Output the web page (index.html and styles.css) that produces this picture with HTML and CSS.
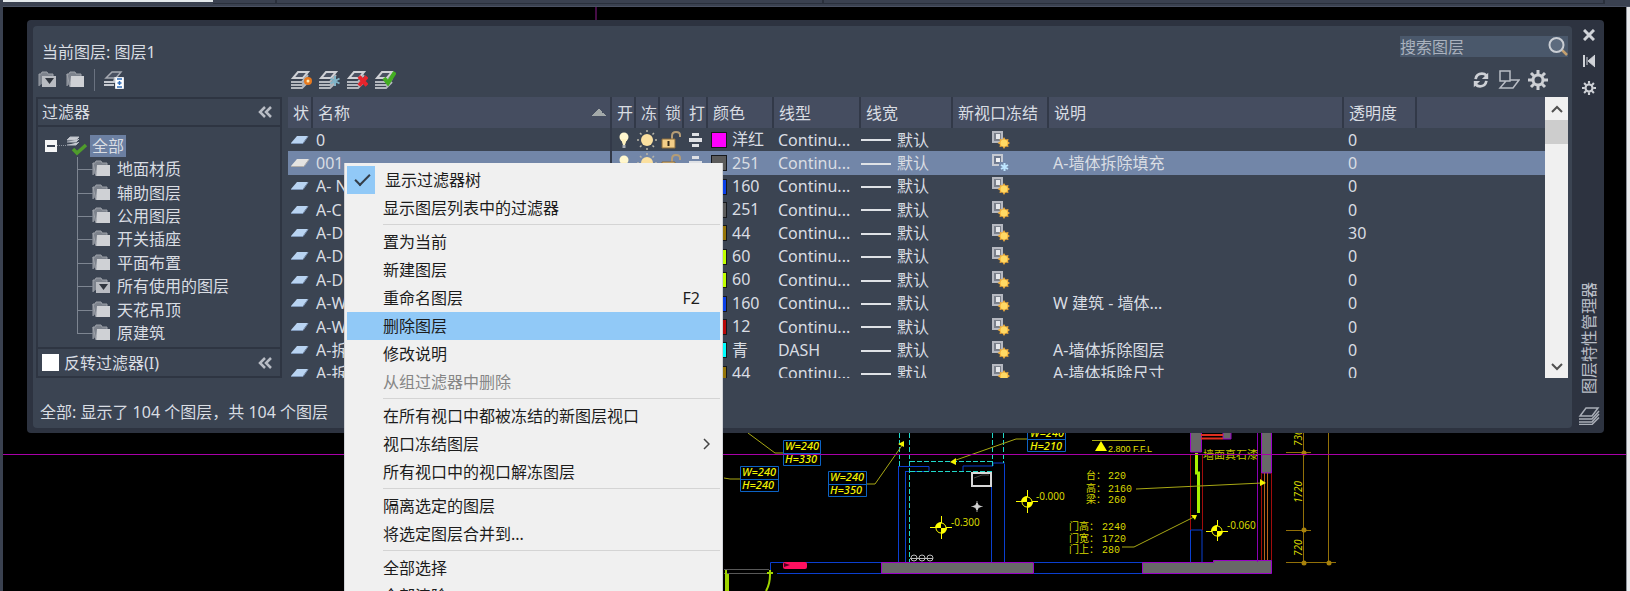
FILE: index.html
```html
<!DOCTYPE html>
<html lang="zh-CN">
<head>
    <meta charset="UTF-8">
    <meta name="viewport" content="width=device-width, initial-scale=1.0">
    <title>图层特性管理器</title>
    <link rel="stylesheet" href="styles.css">
</head>
<body>

<!-- 图标定义 -->
<svg class="icon-defs" width="0" height="0" aria-hidden="true">
    <defs>
        <symbol id="i-layers" viewBox="0 0 22 20">
            <path d="M8 2H18l-5 6H3z" fill="#4a5262" stroke="#cfd1d6" stroke-width="2"/>
            <path d="M1 12h11L18 5M1 15h11l6-6M1 18h11l6-6" fill="none" stroke="#b4b8be" stroke-width="2"/>
        </symbol>
        <symbol id="i-folder" viewBox="0 0 20 18">
            <path d="M1 15V3h2l1-2h5l1 2h5v2" fill="#7d838d" stroke="#9da1a9"/>
            <path d="M5 5h13v11H4z" fill="#cfd1d5"/>
            <path d="M1 3l3 13" stroke="#9da1a9"/>
        </symbol>
        <symbol id="i-folder-filter" viewBox="0 0 20 18">
            <path d="M1 15V3h2l1-2h5l1 2h5v2" fill="#7d838d" stroke="#9da1a9"/>
            <path d="M4 5h14v11H4z" fill="#b9bcc2"/>
            <path d="M7 7h9l-4.500 6z" fill="#30363f"/>
        </symbol>
        <symbol id="i-sheet" viewBox="0 0 20 12">
            <path d="M7 2h11l-5 7H1z" fill="#b9d4f2"/>
            <path d="M1 9.500h12l5-7" fill="none" stroke="#7f97b8"/>
        </symbol>
        <symbol id="i-sheet-gray" viewBox="0 0 20 12">
            <path d="M7 2h12l-5 7H1z" fill="#e4e3e1"/>
            <path d="M1 9.500h13l5-7" fill="none" stroke="#b0adaa"/>
        </symbol>
        <symbol id="i-bulb" viewBox="0 0 20 20">
            <circle cx="10" cy="7" r="4.500" fill="#fff7cf"/>
            <path d="M7 9h6l-2 6H9z" fill="#fff2c0"/>
            <path d="M8.500 15h3v3h-3z" fill="#a9adb3"/>
        </symbol>
        <symbol id="i-sun" viewBox="0 0 20 20">
            <circle cx="10" cy="10" r="6" fill="#fbe0a0"/>
            <path d="M10 0v2M10 18v2M0 10h2M18 10h2M3 3l1.500 1.500M15.500 15.500L17 17M17 3l-1.500 1.500M4.500 15.500L3 17" stroke="#b9b5a8" stroke-width="1.500"/>
        </symbol>
        <symbol id="i-lock" viewBox="0 0 20 20">
            <path d="M11 9V6q0-4 4-4t4 3v2" fill="none" stroke="#b59c75" stroke-width="2"/>
            <path d="M1 9h13v9H1z" fill="#f3cd87" stroke="#8b6d3c"/>
            <path d="M7.500 11v5" stroke="#33291a" stroke-width="2"/>
        </symbol>
        <symbol id="i-print" viewBox="0 0 20 20">
            <path d="M7 3h7v3H7zM4 8h13v4H4zM7 14h7v3H7z" fill="#dfe1e5"/>
        </symbol>
        <symbol id="i-vp" viewBox="0 0 20 20">
            <path d="M3 2h9v10H3z" fill="#7a808b" stroke="#b6b9c1" stroke-width="2"/>
            <path d="M6 4h4v5H6z" fill="#e6e8ec"/>
            <path d="M14 7l1.500 2.500L18.500 9 18 11.500l2 1.500-2 1.500.5 2.500-3-.5L14 19l-1.500-2.500-3 .5.5-2.500L7.500 13 10 11.500 9.500 9l3 .5z" fill="#f0ac38"/>
            <circle cx="14" cy="13" r="3.500" fill="#ffd964"/>
        </symbol>
        <symbol id="i-vp-frozen" viewBox="0 0 20 20">
            <path d="M3 2h9v10H3z" fill="#6f7a90" stroke="#c6cad3" stroke-width="2"/>
            <path d="M6 5h4v4H6z" fill="#f2f3f6"/>
            <path d="M9 9h11v10H9z" fill="#7286a8"/>
            <path d="M14.500 10v8M11 12l7 4M18 12l-7 4" stroke="#bfe6ff" stroke-width="2"/>
        </symbol>
        <symbol id="i-gear" viewBox="0 0 20 20">
            <circle cx="10" cy="10" r="5" fill="none" stroke="#cdd0d5" stroke-width="3"/>
            <path d="M10 0v4M10 16v4M0 10h4M16 10h4M3 3l3 3M14 14l3 3M17 3l-3 3M6 14l-3 3" stroke="#cdd0d5" stroke-width="3"/>
        </symbol>
        <symbol id="i-collapse" viewBox="0 0 14 12">
            <path d="M7 1L2 6l5 5M13 1L8 6l5 5" fill="none" stroke="#b9bdc5" stroke-width="2.500"/>
        </symbol>
    </defs>
</svg>

<div class="tab-strip"><div class="tab-active"></div><div class="tab"></div><div class="tab tab-wide"></div><div class="tab tab-wide tab-last"></div></div>

<!-- 绘图区 -->
<svg class="drawing" width="1630" height="591" viewBox="0 0 1630 591">
    <path d="M596 7v14" stroke="#8c1a8c"/>

    <!-- 墙体 -->
    <g fill="none" stroke="#0b3fd0">
        <path d="M770.500 574v-11.500h112M777 573.500h105M1034 562.500h109M1034 573.500h109"/>
        <path d="M898.500 466v96M905.500 471v91M991.500 471v91M1004.500 464v98M899 466.500h30v5M963 471v-5h30v-3h12M905 471.500h24"/>
        <path d="M1190.500 562v-32h11.500v32"/>
    </g>
    <g fill="none" stroke="#20d8c8" stroke-dasharray="5 2">
        <path d="M899.500 433v33M909.500 433v129M992.500 433v34M1003.500 433v30M910 461.500h82M910 471.500h82"/>
    </g>
    <g fill="#686868" stroke="#9a00c8">
        <path d="M881.500 562.500h152v11h-152z"/>
        <path d="M1142.500 562.500h71v-2h58v13h-129z"/>
        <path d="M1190.500 430v22h11v-22M1261.500 430v43h10v-43M1223 430v9h8v-9"/>
    </g>
    <path d="M1201 435h22M1201 438.500h22" stroke="#e03020" stroke-width="2"/>
    <path d="M1257.500 433v129" stroke="#8a00b0"/>
    <path d="M1190.500 454v76M1202.500 454v76M1261.500 473v87M1271.500 473v87" stroke="#a00c0c"/>
    <path d="M1264.500 473v87M1267.500 473v87" stroke="#b8621c"/>
    <path d="M1196.500 453v20h2v40" fill="none" stroke="#a8f000" stroke-width="3"/>

    <!-- 引线 -->
    <g fill="none" stroke="#a8a814">
        <path d="M748 433l27 20h8M724 478l6 1h10M867 484h8l28-40M1028 439h-12l-60 21l-3 2M1136 489l126-6M1122 547h12l60-30"/>
    </g>
    <path d="M898 444l6-3v6zM950 462l6-4v7zM1266 483l-6-4v7zM1197 515l-6 0l4 5z" fill="#f4f400"/>
    <path d="M1092 440.500h53" stroke="#a8a814"/>
    <path d="M1095 451l6-10 6 10z" fill="#ff0"/>

    <!-- 梁标注 -->
    <g fill="none" stroke="#0c62c4">
        <path d="M783.500 440.500h37v25h-37zM783 453.500h38M740.500 466.500h38v25h-38zM740 479.500h38M828.500 471.500h38v25h-38zM828 484.500h38M1027.500 426.500h38v25h-38zM1027 439.500h38"/>
    </g>
    <g class="cad-beam">
        <text x="785" y="450">W=240</text><text x="785" y="463">H=330</text>
        <text x="742" y="476">W=240</text><text x="742" y="489">H=240</text>
        <text x="830" y="481">W=240</text><text x="830" y="494">H=350</text>
        <text x="1030" y="437">W=240</text><text x="1030" y="450">H=210</text>
    </g>
    <text x="1108" y="452" class="cad-floor">2.800 F.F.L</text>

    <!-- 标高 -->
    <g stroke="#ff0" fill="#000">
        <path d="M930 527.500h22M941.500 516v23M1016 501.500h22M1027.500 490v23M1206 531.500h22M1217.500 520v21"/>
        <circle cx="941" cy="528" r="5"/><circle cx="1027" cy="502" r="5"/><circle cx="1217" cy="531" r="5"/>
    </g>
    <path d="M941 528v-6a6 6 0 0 0-6 6zM941 528v6a6 6 0 0 0 6-6zM1027 502v-6a6 6 0 0 0-6 6zM1027 502v6a6 6 0 0 0 6-6zM1217 531v-6a6 6 0 0 0-6 6zM1217 531v6a6 6 0 0 0 6-6z" fill="#ff0"/>
    <g class="cad-level">
        <text x="951" y="526">-0.300</text>
        <text x="1036" y="500">-0.000</text>
        <text x="1227" y="529">-0.060</text>
    </g>

    <!-- 门窗说明 -->
    <g class="cad-note">
        <text x="1086" y="479">台：<tspan x="1108">220</tspan></text>
        <text x="1086" y="492">高：<tspan x="1108">2160</tspan></text>
        <text x="1086" y="503">梁：<tspan x="1108">260</tspan></text>
        <text x="1069" y="530">门高：<tspan x="1102">2240</tspan></text>
        <text x="1069" y="542">门宽：<tspan x="1102">1720</tspan></text>
        <text x="1069" y="553">门上：<tspan x="1102">280</tspan></text>
    </g>
    <text x="1203" y="459" class="cad-wall">墙面真石漆</text>

    <!-- 尺寸线 -->
    <path d="M1303.500 433v130M1328.500 433v130M1286 452.500h25M1286 530.500h25M1286 562.500h50" stroke="#927008"/>
    <g fill="#a8820c"><circle cx="1304" cy="453" r="2.500"/><circle cx="1304" cy="530" r="2.500"/><circle cx="1304" cy="563" r="2.500"/><circle cx="1329" cy="563" r="2.500"/></g>
    <g class="cad-dim">
        <text transform="translate(1302 446) rotate(-90)">730</text>
        <text transform="translate(1302 503) rotate(-90)">1720</text>
        <text transform="translate(1302 556) rotate(-90)">720</text>
    </g>

    <!-- 洁具和门 -->
    <path d="M972 473h19v13h-19z" fill="none" stroke="#d8d8d8" stroke-width="2"/>
    <path d="M974 478l8-3h7" fill="none" stroke="#484848"/>
    <path d="M977 501v11M971.500 506.500h11" stroke="#a0a0a0"/>
    <path d="M977 503l1.500 2.500 2.500 1-2.500 1-1.500 2.500-1.500-2.500-2.500-1 2.500-1z" fill="#d0d0d0" stroke="#d0d0d0"/>
    <g fill="none" stroke="#b8b8b8"><circle cx="914" cy="558" r="3"/><circle cx="922" cy="558" r="3"/><circle cx="930" cy="558" r="3"/><path d="M910 558.500h23"/></g>
    <rect x="783" y="562" width="24" height="7" rx="2" fill="#ff1060"/>
    <path d="M784 563l6 2-6 2z" fill="#500020"/>
    <path d="M724 569.500h45M724 573.500h45" stroke="#585858"/>
    <path d="M726 570v21M728 574v17M770 570v5q0 9-4 16M767 573h6" fill="none" stroke="#9fd400" stroke-width="2"/>

    <path d="M3 454.500h1624" stroke="#a800a8"/>
</svg>

<main class="palette">
    <section class="panel">
        <div class="title-row">
            <h1 class="current-layer">当前图层: 图层1</h1>
            <div class="search">
                <input type="search" class="search-input" placeholder="搜索图层" aria-label="搜索图层">
                <svg class="search-icon" width="20" height="22" viewBox="0 0 20 22"><path d="M14 14l5 5" stroke="#c4a070" stroke-width="2.500"/><circle cx="8.500" cy="9" r="7" fill="#5d6b7e" stroke="#c9cdd3" stroke-width="2"/></svg>
            </div>
        </div>

        <div class="toolbar">
            <div class="tools tools-filter">
                <button class="tool" aria-label="新建特性过滤器"><svg width="20" height="18"><use href="#i-folder-filter"/></svg></button>
                <button class="tool" aria-label="新建组过滤器"><svg width="20" height="18"><use href="#i-folder"/></svg></button>
                <span class="tool-sep"></span>
                <button class="tool" aria-label="图层状态管理器"><svg width="22" height="20" viewBox="0 0 22 20"><path d="M9 2h9l-5 6H3z" fill="#4a5262" stroke="#a5a9b1" stroke-width="1.500"/><path d="M1 12h10l1-4h6M1 15h10" fill="none" stroke="#c6c9cf" stroke-width="2"/><path d="M12.500 7.500h8v11h-8z" fill="#fff" stroke="#e8eaee"/><path d="M14 9h5M14 17h5M16.500 11v4M14.500 13h4" stroke="#2f6cb8" stroke-width="1.500"/></svg></button>
            </div>
            <div class="tools tools-layer">
                <button class="tool" aria-label="新建图层"><svg width="22" height="20" viewBox="0 0 22 20"><use href="#i-layers"/><circle cx="18" cy="11" r="4" fill="#e8791e"/><circle cx="18" cy="11" r="1.500" fill="#ffe9b0"/></svg></button>
                <button class="tool" aria-label="在所有视口中都被冻结的新图层视口"><svg width="22" height="20" viewBox="0 0 22 20"><use href="#i-layers"/><path d="M17 6v10M12.500 8.500l9 5M21.500 8.500l-9 5" stroke="#7fb4c8" stroke-width="2"/></svg></button>
                <button class="tool" aria-label="删除图层"><svg width="22" height="20" viewBox="0 0 22 20"><use href="#i-layers"/><path d="M13 6.500l8 9M21 6.500l-8 9" stroke="#e8242c" stroke-width="4"/></svg></button>
                <button class="tool" aria-label="置为当前"><svg width="22" height="20" viewBox="0 0 22 20"><use href="#i-layers"/><path d="M10 8l4 5 7-11" fill="none" stroke="#43ad22" stroke-width="4"/></svg></button>
            </div>
            <div class="tools tools-right">
                <button class="tool" aria-label="刷新"><svg width="18" height="18" viewBox="0 0 20 20"><path d="M4 9q1-6 7-6 3 0 5 2M16 11q-1 6-7 6-3 0-5-2" fill="none" stroke="#cdd0d5" stroke-width="3"/><path d="M18 2v7h-7zM2 18v-7h7z" fill="#cdd0d5"/></svg></button>
                <button class="tool" aria-label="切换替代亮显"><svg width="22" height="20" viewBox="0 0 22 20"><path d="M2 1h10v10H2zM12 10h9l-6 8H2l6-7" fill="none" stroke="#b9bdc5" stroke-width="1.500"/></svg></button>
                <button class="tool" aria-label="设置"><svg width="20" height="20"><use href="#i-gear"/></svg></button>
            </div>
        </div>

        <div class="workspace">
            <aside class="filters">
                <div class="filters-head"><span>过滤器</span><button class="tool" aria-label="收拢过滤器"><svg width="14" height="12"><use href="#i-collapse"/></svg></button></div>
                <ul class="tree">
                    <li class="tree-root"><button class="expander" aria-label="收拢"></button><span class="root-line"></span><svg width="22" height="20" viewBox="0 0 22 20"><path d="M4 1h9l-3 3H1zM1 6h9l3-3M1 9h9l3-3" fill="#c9ccd2" stroke="#b9bdc5"/><path d="M7 13l4 4 9-8" fill="none" stroke="#4f9c2c" stroke-width="3.500"/></svg><span class="tree-label">全部</span></li>
                    <li class="tree-item"><svg width="20" height="18"><use href="#i-folder"/></svg>地面材质</li>
                    <li class="tree-item"><svg width="20" height="18"><use href="#i-folder"/></svg>辅助图层</li>
                    <li class="tree-item"><svg width="20" height="18"><use href="#i-folder"/></svg>公用图层</li>
                    <li class="tree-item"><svg width="20" height="18"><use href="#i-folder"/></svg>开关插座</li>
                    <li class="tree-item"><svg width="20" height="18"><use href="#i-folder"/></svg>平面布置</li>
                    <li class="tree-item"><svg width="20" height="18"><use href="#i-folder-filter"/></svg>所有使用的图层</li>
                    <li class="tree-item"><svg width="20" height="18"><use href="#i-folder"/></svg>天花吊顶</li>
                    <li class="tree-item"><svg width="20" height="18"><use href="#i-folder"/></svg>原建筑</li>
                </ul>
                <div class="filters-foot"><label class="invert"><input type="checkbox" class="check">反转过滤器(I)</label><button class="tool" aria-label="收拢"><svg width="14" height="12"><use href="#i-collapse"/></svg></button></div>
            </aside>

            <div class="list">
                <div class="list-view">
                <table class="layers">
                    <colgroup><col class="c-state"><col class="c-name"><col class="c-flag"><col class="c-flag"><col class="c-flag"><col class="c-flag"><col class="c-color"><col class="c-type"><col class="c-weight"><col class="c-vp"><col class="c-note"><col class="c-alpha"><col></colgroup>
                    <thead>
                        <tr><th>状</th><th class="sorted">名称</th><th>开</th><th>冻</th><th>锁</th><th>打</th><th>颜色</th><th>线型</th><th>线宽</th><th>新视口冻结</th><th>说明</th><th>透明度</th><th></th></tr>
                    </thead>
                    <tbody>
                        <tr>
                            <td><svg width="20" height="12"><use href="#i-sheet"/></svg></td><td>0</td>
                            <td><svg width="20" height="20"><use href="#i-bulb"/></svg></td><td><svg width="20" height="20"><use href="#i-sun"/></svg></td><td><svg width="20" height="20"><use href="#i-lock"/></svg></td><td><svg width="20" height="20"><use href="#i-print"/></svg></td>
                            <td><span class="swatch magenta"></span>洋红</td><td>Continu...</td><td><span class="stroke"></span>默认</td><td class="vp"><svg width="20" height="20"><use href="#i-vp"/></svg></td><td></td><td>0</td><td></td>
                        </tr>
                        <tr class="selected">
                            <td><svg width="20" height="12"><use href="#i-sheet-gray"/></svg></td><td>001</td>
                            <td><svg width="20" height="20"><use href="#i-bulb"/></svg></td><td><svg width="20" height="20"><use href="#i-sun"/></svg></td><td><svg width="20" height="20"><use href="#i-lock"/></svg></td><td><svg width="20" height="20"><use href="#i-print"/></svg></td>
                            <td><span class="swatch gray"></span>251</td><td>Continu...</td><td><span class="stroke"></span>默认</td><td class="vp"><svg width="20" height="20"><use href="#i-vp-frozen"/></svg></td><td>A-墙体拆除填充</td><td>0</td><td></td>
                        </tr>
                        <tr>
                            <td><svg width="20" height="12"><use href="#i-sheet"/></svg></td><td>A- N</td><td></td><td></td><td></td><td></td>
                            <td><span class="swatch blue"></span>160</td><td>Continu...</td><td><span class="stroke"></span>默认</td><td class="vp"><svg width="20" height="20"><use href="#i-vp"/></svg></td><td></td><td>0</td><td></td>
                        </tr>
                        <tr>
                            <td><svg width="20" height="12"><use href="#i-sheet"/></svg></td><td>A-C</td><td></td><td></td><td></td><td></td>
                            <td><span class="swatch gray"></span>251</td><td>Continu...</td><td><span class="stroke"></span>默认</td><td class="vp"><svg width="20" height="20"><use href="#i-vp"/></svg></td><td></td><td>0</td><td></td>
                        </tr>
                        <tr>
                            <td><svg width="20" height="12"><use href="#i-sheet"/></svg></td><td>A-D</td><td></td><td></td><td></td><td></td>
                            <td><span class="swatch ochre"></span>44</td><td>Continu...</td><td><span class="stroke"></span>默认</td><td class="vp"><svg width="20" height="20"><use href="#i-vp"/></svg></td><td></td><td>30</td><td></td>
                        </tr>
                        <tr>
                            <td><svg width="20" height="12"><use href="#i-sheet"/></svg></td><td>A-D</td><td></td><td></td><td></td><td></td>
                            <td><span class="swatch lime"></span>60</td><td>Continu...</td><td><span class="stroke"></span>默认</td><td class="vp"><svg width="20" height="20"><use href="#i-vp"/></svg></td><td></td><td>0</td><td></td>
                        </tr>
                        <tr>
                            <td><svg width="20" height="12"><use href="#i-sheet"/></svg></td><td>A-D</td><td></td><td></td><td></td><td></td>
                            <td><span class="swatch lime"></span>60</td><td>Continu...</td><td><span class="stroke"></span>默认</td><td class="vp"><svg width="20" height="20"><use href="#i-vp"/></svg></td><td></td><td>0</td><td></td>
                        </tr>
                        <tr>
                            <td><svg width="20" height="12"><use href="#i-sheet"/></svg></td><td>A-W</td><td></td><td></td><td></td><td></td>
                            <td><span class="swatch blue"></span>160</td><td>Continu...</td><td><span class="stroke"></span>默认</td><td class="vp"><svg width="20" height="20"><use href="#i-vp"/></svg></td><td>W 建筑 - 墙体...</td><td>0</td><td></td>
                        </tr>
                        <tr>
                            <td><svg width="20" height="12"><use href="#i-sheet"/></svg></td><td>A-W</td><td></td><td></td><td></td><td></td>
                            <td><span class="swatch red"></span>12</td><td>Continu...</td><td><span class="stroke"></span>默认</td><td class="vp"><svg width="20" height="20"><use href="#i-vp"/></svg></td><td></td><td>0</td><td></td>
                        </tr>
                        <tr>
                            <td><svg width="20" height="12"><use href="#i-sheet"/></svg></td><td>A-拆</td><td></td><td></td><td></td><td></td>
                            <td><span class="swatch cyan"></span>青</td><td>DASH</td><td><span class="stroke"></span>默认</td><td class="vp"><svg width="20" height="20"><use href="#i-vp"/></svg></td><td>A-墙体拆除图层</td><td>0</td><td></td>
                        </tr>
                        <tr>
                            <td><svg width="20" height="12"><use href="#i-sheet"/></svg></td><td>A-拆</td><td></td><td></td><td></td><td></td>
                            <td><span class="swatch ochre"></span>44</td><td>Continu...</td><td><span class="stroke"></span>默认</td><td class="vp"><svg width="20" height="20"><use href="#i-vp"/></svg></td><td>A-墙体拆除尺寸</td><td>0</td><td></td>
                        </tr>
                    </tbody>
                </table>
                </div>
                <div class="scrollbar">
                    <button class="scroll-btn" aria-label="向上滚动"><svg width="12" height="8" viewBox="0 0 12 8"><path d="M1 7l5-5 5 5" fill="none" stroke="#505050" stroke-width="2"/></svg></button>
                    <div class="thumb"></div>
                    <button class="scroll-btn scroll-down" aria-label="向下滚动"><svg width="12" height="8" viewBox="0 0 12 8"><path d="M1 1l5 5 5-5" fill="none" stroke="#505050" stroke-width="2"/></svg></button>
                </div>
            </div>
        </div>

        <p class="status">全部: 显示了 104 个图层，共 104 个图层</p>
    </section>

    <aside class="dock">
        <button class="tool" aria-label="关闭"><svg width="12" height="12" viewBox="0 0 12 12"><path d="M1 1l10 10M11 1L1 11" stroke="#d0d3d8" stroke-width="3"/></svg></button>
        <button class="tool" aria-label="自动隐藏"><svg width="12" height="14" viewBox="0 0 12 14"><path d="M1 1v12" stroke="#d0d3d8" stroke-width="2"/><path d="M4 3v8M12 1v12L5 7z" fill="#d0d3d8" stroke="#d0d3d8"/></svg></button>
        <button class="tool" aria-label="特性"><svg width="14" height="14"><use href="#i-gear"/></svg></button>
        <span class="dock-title">图层特性管理器</span>
        <svg class="dock-logo" width="22" height="18" viewBox="0 0 22 18"><path d="M8 1h12l-6 8H2zM1 12h13l7-8M1 15h13l7-8M1 17.500h13l7-7" fill="none" stroke="#a9aeb7" stroke-width="1.500"/></svg>
    </aside>
</main>

<!-- 右键菜单 -->
<div class="menu" role="menu">
    <button class="menu-item checked" role="menuitem">显示过滤器树</button>
    <button class="menu-item" role="menuitem">显示图层列表中的过滤器</button>
    <hr class="menu-sep">
    <button class="menu-item" role="menuitem">置为当前</button>
    <button class="menu-item" role="menuitem">新建图层</button>
    <button class="menu-item" role="menuitem">重命名图层<span class="shortcut">F2</span></button>
    <button class="menu-item active" role="menuitem">删除图层</button>
    <button class="menu-item" role="menuitem">修改说明</button>
    <button class="menu-item" role="menuitem" disabled>从组过滤器中删除</button>
    <hr class="menu-sep">
    <button class="menu-item" role="menuitem">在所有视口中都被冻结的新图层视口</button>
    <button class="menu-item" role="menuitem">视口冻结图层<svg class="submenu" width="7" height="12" viewBox="0 0 7 12"><path d="M1 1l5 5-5 5" fill="none" stroke="#444" stroke-width="1.500"/></svg></button>
    <button class="menu-item" role="menuitem">所有视口中的视口解冻图层</button>
    <hr class="menu-sep">
    <button class="menu-item" role="menuitem">隔离选定的图层</button>
    <button class="menu-item" role="menuitem">将选定图层合并到...</button>
    <hr class="menu-sep">
    <button class="menu-item" role="menuitem">全部选择</button>
    <button class="menu-item" role="menuitem">全部清除</button>
</div>

</body>
</html>
```

FILE: styles.css
```css
* {
    box-sizing: border-box;
}

body {
    position: relative;
    height: 100vh;
    margin: 0;
    overflow: hidden;
    background: #000;
    border-left: 3px solid #3a4150;
    color: #d9dde3;
    font-family: "Noto Sans", "Noto Sans CJK SC", sans-serif;
    font-size: 16px;
    line-height: 22px;
}

/* 绘图区右侧的浅色边 */
body::after {
    content: "";
    position: absolute;
    top: 7px;
    right: 0;
    bottom: 0;
    width: 3px;
    background: #e9eaec;
    border-left: 1px solid #8d9098;
}

.icon-defs {
    position: absolute;
}

svg {
    display: block;
    flex: none;
}

button {
    padding: 0;
    border: 0;
    background: none;
    color: inherit;
    font: inherit;
}

.tool {
    display: flex;
}

/* 顶部标签条 */
.tab-strip {
    display: flex;
    height: 7px;
    margin-left: -3px;
    background: #3a4150;
    border-bottom: 1px solid #4a5162;
}

.tab-active {
    width: 213px;
    height: 2px;
    background: #e4e9ec;
}

.tab {
    width: 64px;
    height: 4px;
    border-right: 2px solid #2a303c;
    border-bottom: 1px solid #2a303c;
}

.tab-wide {
    flex: 7;
}

.tab-last {
    flex: 10;
    margin-right: 25px;
}

/* CAD 图形 */
.drawing {
    position: absolute;
    top: 0;
    left: -3px;
}

.cad-beam {
    fill: #f4f400;
    font-size: 11px;
    font-style: italic;
    font-weight: 500;
}

.cad-floor {
    fill: #e0e000;
    font-family: "Liberation Sans", sans-serif;
    font-size: 9px;
}

.cad-level {
    fill: #d8d800;
    font-size: 10px;
}

.cad-note {
    fill: #d8d800;
    font-family: "Liberation Mono", "Noto Sans CJK SC", monospace;
    font-size: 10px;
}

.cad-wall {
    fill: #c0c000;
    font-size: 11px;
}

.cad-dim {
    fill: #d8d800;
    font-size: 10px;
    font-style: italic;
}

/* 选项板外框 */
.palette {
    position: relative;
    display: flex;
    margin: 13px 26px 0 24px;
    padding: 6px 0 5px 6px;
    background: #2d3340;
    border-radius: 4px;
}

.panel {
    flex: 1;
    min-width: 0;
    padding: 10px 4px 4px 3px;
    background: #3b4452;
    border-radius: 4px;
}

.title-row {
    display: flex;
    justify-content: space-between;
    align-items: flex-start;
}

.current-layer {
    margin: 0 0 0 6px;
    font-size: 16px;
    font-weight: 400;
    line-height: 32px;
}

.search {
    display: flex;
    align-items: center;
    width: 168px;
    height: 21px;
    background: #4a586b;
}

.search-input {
    flex: 1;
    min-width: 0;
    padding: 0;
    border: 0;
    outline: 0;
    background: none;
    color: #aab2be;
    font: inherit;
}

.search-input::placeholder {
    color: #aab2be;
}

.toolbar,
.tools {
    display: flex;
    align-items: center;
}

.toolbar {
    height: 24px;
    margin-bottom: 5px;
}

.tools-filter {
    gap: 8px;
    width: 252px;
    padding-left: 2px;
}

.tool-sep {
    width: 1px;
    height: 22px;
    background: #6a7280;
}

.tools-layer {
    gap: 6px;
    padding-left: 2px;
}

.tools-right {
    gap: 8px;
    margin-left: auto;
    padding-right: 20px;
}

.workspace {
    display: flex;
    gap: 6px;
    height: 281px;
}

/* 过滤器树 */
.filters {
    display: flex;
    flex-direction: column;
    width: 246px;
    border: 2px solid #2e3542;
}

.filters-head,
.filters-foot {
    display: flex;
    justify-content: space-between;
    align-items: center;
    padding: 0 8px 0 4px;
}

.filters-head {
    height: 28px;
    border-bottom: 2px solid #2e3542;
}

.filters-foot {
    height: 29px;
    border-top: 2px solid #2e3542;
}

.tree {
    display: flex;
    flex: 1;
    flex-direction: column;
    margin: 0;
    padding: 7px 0 2px 7px;
    list-style: none;
}

.tree-root,
.tree-item {
    display: flex;
    flex: 1;
    align-items: center;
}

.expander {
    width: 12px;
    height: 12px;
    background: linear-gradient(#3b4452, #3b4452) center / 8px 2px no-repeat #f4f5f6;
}

.root-line {
    width: 9px;
    border-top: 1px dotted #8d949f;
}

.tree-label {
    margin-left: 2px;
    padding: 0 2px;
    background: #6c80a2;
}

.tree-item {
    position: relative;
    gap: 5px;
    margin-left: 32px;
    padding-left: 15px;
}

/* 树的连接线 */
.tree-item::before {
    content: "";
    position: absolute;
    top: 0;
    left: 0;
    width: 15px;
    height: 50%;
    border-bottom: 1px solid #7d8591;
    border-left: 1px solid #7d8591;
}

.tree-item:not(:last-child)::after {
    content: "";
    position: absolute;
    top: 50%;
    bottom: 0;
    left: 0;
    border-left: 1px solid #7d8591;
}

.invert {
    display: flex;
    gap: 5px;
    align-items: center;
}

.check {
    width: 17px;
    height: 17px;
    margin: 0;
    background: #fff;
    appearance: none;
}

/* 图层列表 */
.list {
    display: flex;
    flex: 1;
    min-width: 0;
}

.list-view {
    flex: 1;
    min-width: 0;
    overflow: hidden;
}

.layers {
    width: 100%;
    height: 288px;
    border-collapse: collapse;
    table-layout: fixed;
}

.c-state { width: 24px; }
.c-name { width: 299px; }
.c-flag { width: 24px; }
.c-color { width: 66px; }
.c-type { width: 87px; }
.c-weight { width: 92px; }
.c-vp { width: 96px; }
.c-note { width: 295px; }
.c-alpha { width: 73px; }

.layers th {
    height: 31px;
    padding: 0 0 0 5px;
    background: #454d60;
    border-left: 2px solid #323948;
    font-weight: 400;
    text-align: left;
    white-space: nowrap;
    overflow: hidden;
}

.layers th:first-child {
    border-left: 0;
}

.layers .sorted {
    background: linear-gradient(to bottom right, transparent 50%, #a3a9a9 50%) right 11px center / 7px 7px no-repeat,
        linear-gradient(to bottom left, transparent 50%, #a3a9a9 50%) right 4px center / 7px 7px no-repeat, #454d60;
}

.layers td {
    padding: 0 0 0 4px;
    line-height: 20px;
    white-space: nowrap;
    overflow: hidden;
}

.layers td:first-child,
.layers td:nth-child(n+3):nth-child(-n+6) {
    padding-left: 2px;
}

.layers td:nth-child(n+8) {
    padding-left: 5px;
}

.layers td:nth-child(3) {
    border-left: 2px solid #323948;
}

.layers td .swatch,
.layers td .stroke {
    display: inline-block;
    vertical-align: middle;
}

.layers .vp svg {
    margin-left: 33px;
}

.selected {
    background: #7286a8;
}

.swatch {
    width: 16px;
    height: 16px;
    margin: 0 5px 2px 0;
    border: 1px solid #16181c;
}

.magenta { background: #f0f; }
.gray { background: #5b5b5b; }
.blue { background: #0a3fe8; }
.ochre { background: #957509; }
.lime { background: #bfff00; }
.red { background: #b80808; }
.cyan { background: #0ff; }

.stroke {
    width: 30px;
    height: 2px;
    margin: 0 6px 2px -4px;
    background: #dfe2e6;
}

.scrollbar {
    display: flex;
    flex-direction: column;
    width: 23px;
    background: #f0f0f0;
}

.scroll-btn {
    display: flex;
    justify-content: center;
    align-items: center;
    height: 23px;
}

.scroll-down {
    margin-top: auto;
}

.thumb {
    height: 24px;
    background: #cdcdcd;
}

.status {
    margin: 22px 0 0 4px;
    line-height: 24px;
}

/* 右侧标题栏 */
.dock {
    display: flex;
    flex-direction: column;
    align-items: center;
    gap: 13px;
    width: 32px;
    padding: 3px 0 3px 2px;
}

.dock-title {
    margin-top: auto;
    color: #b9bec7;
    writing-mode: vertical-rl;
    text-orientation: sideways;
    transform: rotate(180deg);
}

/* 右键菜单 */
.menu {
    position: absolute;
    top: 163px;
    left: 341px;
    display: flex;
    flex-direction: column;
    width: 379px;
    padding: 3px 2px;
    background: #f0f0f0;
    border: 1px solid #d0d2d6;
    border-width: 0 1px;
    color: #1c1c1c;
}

.menu-item {
    display: flex;
    align-items: center;
    height: 28px;
    padding: 0 10px 0 36px;
    text-align: left;
}

.menu-item:disabled {
    color: #868686;
}

.active {
    background: #91c9f7;
}

.checked {
    background: linear-gradient(#91c9f7, #91c9f7) left / 28px 28px no-repeat;
}

.checked::before {
    content: "";
    width: 13px;
    height: 6px;
    margin: -4px 15px 0 -28px;
    border: solid #333d48;
    border-width: 0 0 2px 2px;
    transform: rotate(-45deg);
}

.shortcut {
    margin-left: auto;
    padding-right: 10px;
}

.submenu {
    margin-left: auto;
}

.menu-sep {
    width: calc(100% - 36px);
    height: 1px;
    margin: 2px 0 3px 36px;
    border: 0;
    background: #d4d4d4;
}
```
